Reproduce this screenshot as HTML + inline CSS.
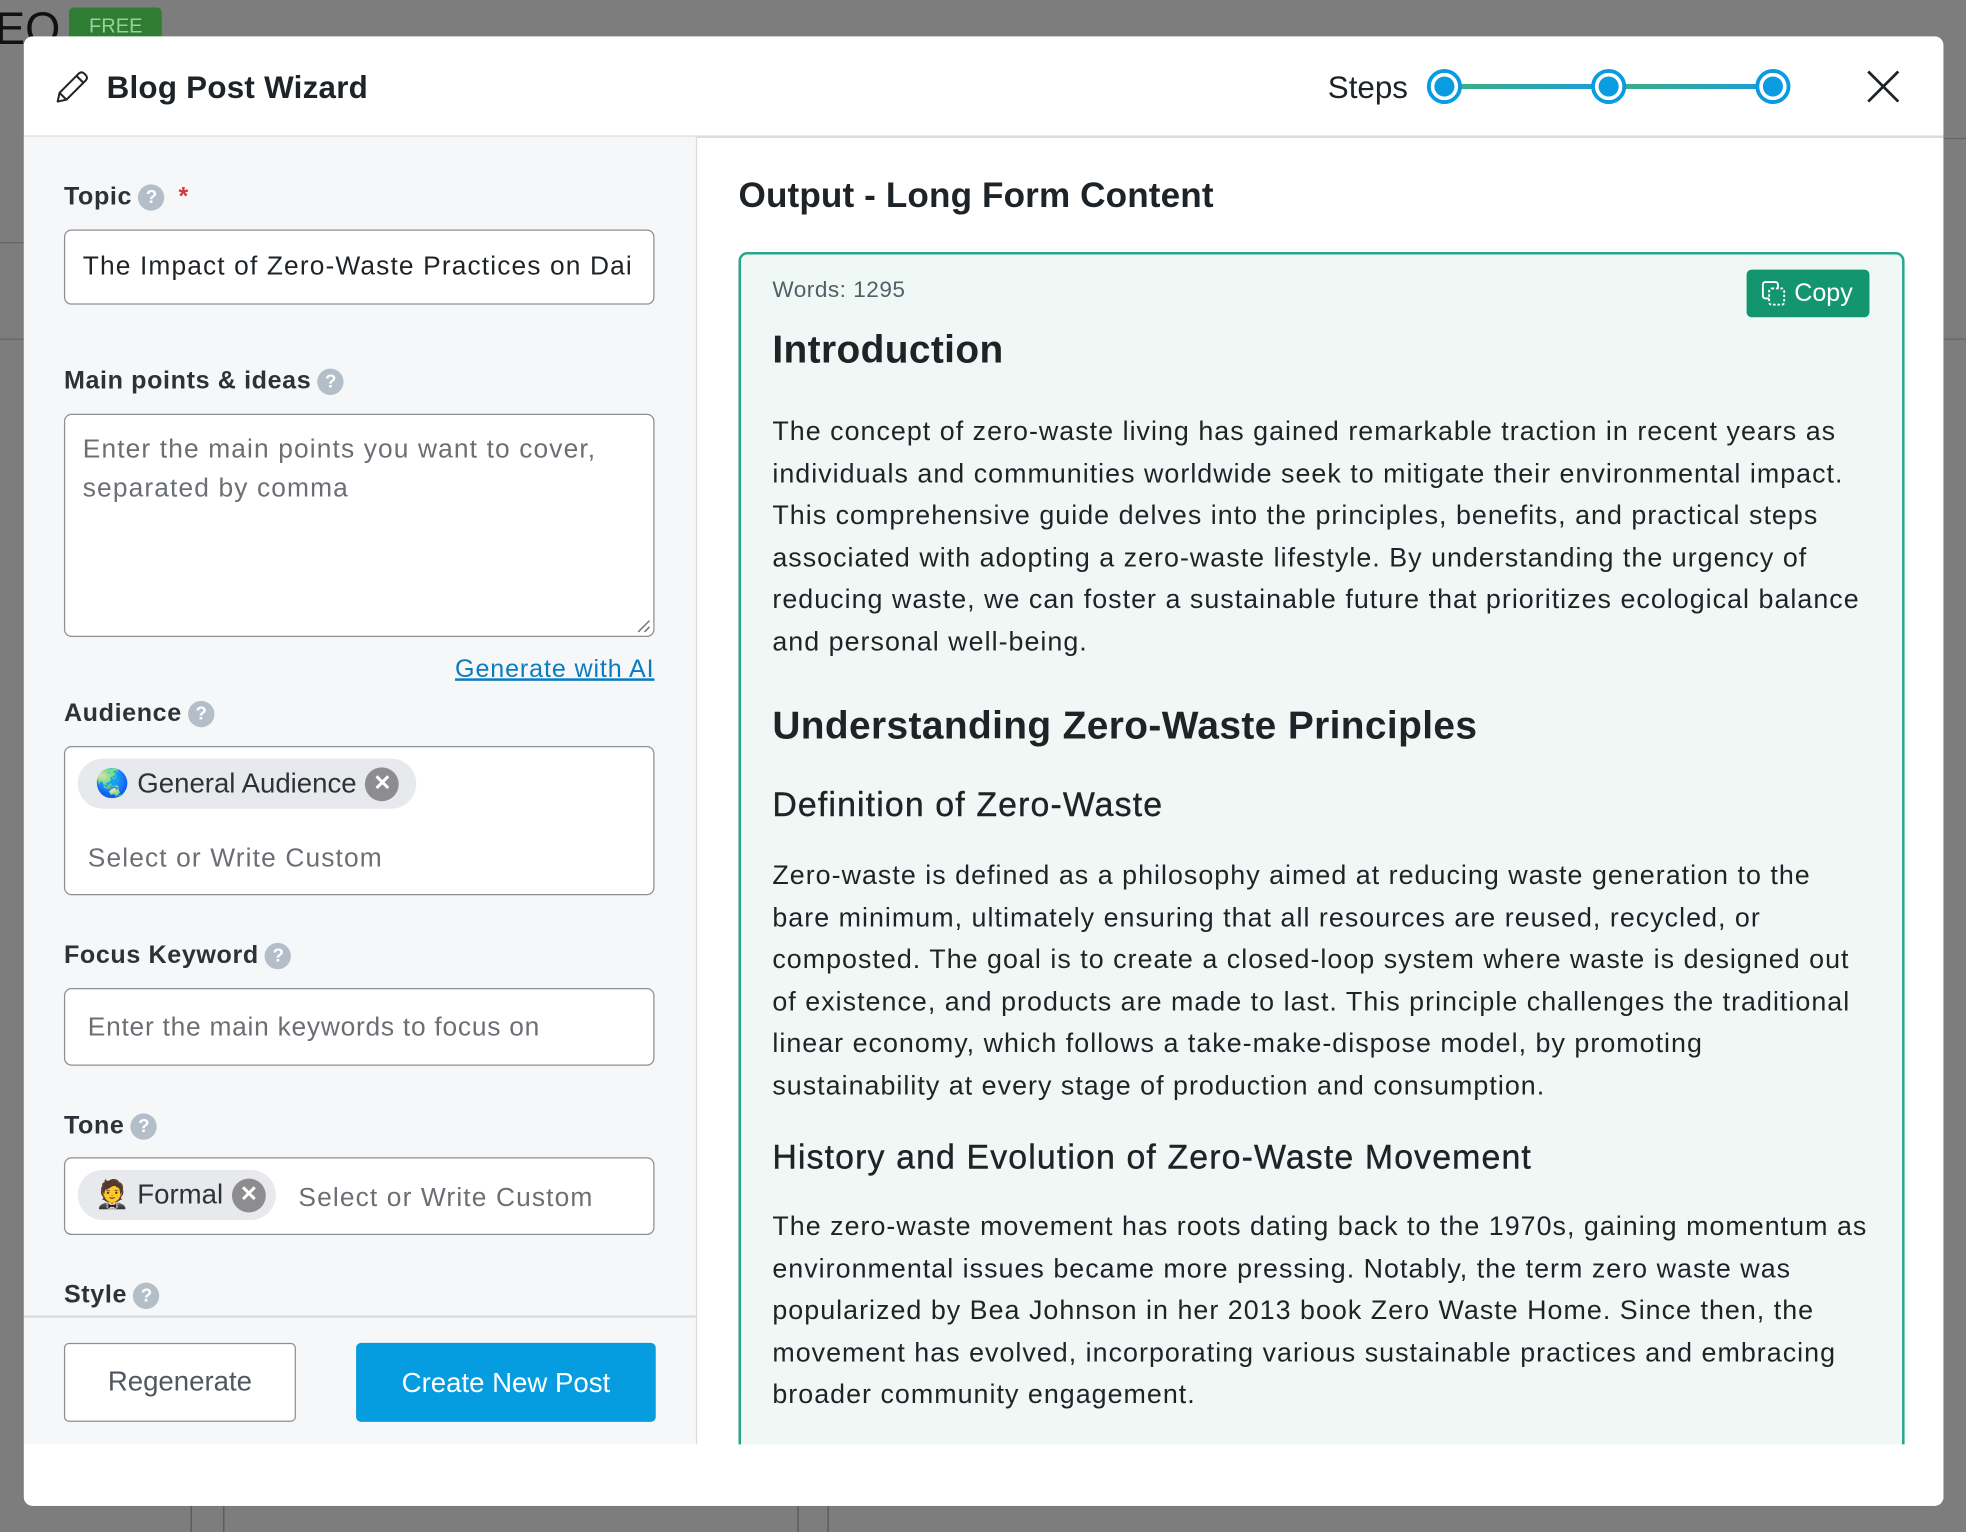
<!DOCTYPE html>
<html><head><meta charset="utf-8"><style>
*{box-sizing:border-box;margin:0;padding:0}
html,body{width:1966px;height:1532px;overflow:hidden;background:#7d7d7d}
#w{position:absolute;left:0;top:0;width:1568px;height:1222px;transform:scale(1.25383);transform-origin:0 0;font-family:"Liberation Sans",sans-serif;color:#1e2327}
.a{position:absolute}
.modal{left:19px;top:29px;width:1531px;height:1172px;background:#fff;border-radius:7px;overflow:hidden}
.lbl{position:absolute;left:32px;font-size:20px;font-weight:bold;color:#2c3338;display:flex;align-items:center;gap:5px;height:26px;letter-spacing:0.5px}
.q{width:21px;height:21px;border-radius:50%;background:#b4bec8;color:#fff;font-size:15px;font-weight:bold;display:inline-flex;align-items:center;justify-content:center;letter-spacing:0}
.inp{position:absolute;left:32px;width:471px;border:1.5px solid #8c8f94;border-radius:6px;background:#fff;font-size:21px;letter-spacing:0.9px}
.ph{color:#6b6f74;letter-spacing:0.9px}
.chip{position:absolute;height:40px;border-radius:20px;background:#e8e9ed;display:flex;align-items:center;font-size:22px;color:#2c3338;padding-left:14px}
.x{width:27px;height:27px;border-radius:50%;background:#8d8d8f;color:#fff;font-size:17px;font-weight:bold;display:inline-flex;align-items:center;justify-content:center;margin-left:7px}
.p{font-size:21.4px;line-height:33.5px;color:#1e2327;white-space:nowrap;letter-spacing:0.82px}
.h2{font-size:31px;font-weight:bold;color:#1e2327;white-space:nowrap;letter-spacing:0.3px}
.h3{font-size:27px;color:#1e2327;white-space:nowrap;letter-spacing:0.9px;-webkit-text-stroke:0.3px #1e2327}
</style></head><body><div id="w">
<div class="a" style="left:-4px;top:2px;font-size:36px;color:#111">EO</div>
<div class="a" style="left:55px;top:6px;width:74px;height:26px;background:#2e7d32;border-radius:4px;color:#9ad09c;font-size:16px;padding:7px 0 0 16px">FREE</div>
<div class="a" style="left:0;top:193px;width:19px;height:1px;background:#666"></div>
<div class="a" style="left:0;top:270px;width:19px;height:1px;background:#666"></div>
<div class="a" style="left:1550px;top:110px;width:18px;height:1px;background:#666"></div>
<div class="a" style="left:1550px;top:270px;width:18px;height:1px;background:#666"></div>
<div class="a" style="left:152px;top:1201px;width:1px;height:21px;background:#555"></div>
<div class="a" style="left:178px;top:1201px;width:1px;height:21px;background:#555"></div>
<div class="a" style="left:636px;top:1201px;width:1px;height:21px;background:#555"></div>
<div class="a" style="left:660px;top:1201px;width:1px;height:21px;background:#555"></div>

<div class="a modal">
 <svg class="a" style="left:25px;top:26px" width="28" height="28" viewBox="0 0 28 28"><path d="M2 26 L3.5 19 L19 3.5 Q21 1.8 23 3.5 L24.5 5 Q26.2 7 24.5 9 L9 24.5 Z M17 5.5 L22.5 11 M3.5 19 L9 24.5" fill="none" stroke="#1e2327" stroke-width="1.6" stroke-linejoin="round"/></svg>
 <div class="a" style="left:66px;top:27px;font-size:25px;font-weight:bold;color:#1e2327;letter-spacing:0.2px">Blog Post Wizard</div>
 <div class="a" style="left:1040px;top:27px;font-size:25px;color:#1e2327">Steps</div>
 <div class="a" style="left:1133px;top:38px;width:262px;height:4px;background:linear-gradient(90deg,#3fb07a,#1a9de0 50%,#3fb07a 50%,#1a9de0)"></div>
 <div class="a" style="left:1119px;top:26px;width:28px;height:28px;border-radius:50%;background:#0b9be0;border:3px solid #0b9be0;box-shadow:inset 0 0 0 3px #fff"></div>
 <div class="a" style="left:1250px;top:26px;width:28px;height:28px;border-radius:50%;background:#0b9be0;border:3px solid #0b9be0;box-shadow:inset 0 0 0 3px #fff"></div>
 <div class="a" style="left:1381px;top:26px;width:28px;height:28px;border-radius:50%;background:#0b9be0;border:3px solid #0b9be0;box-shadow:inset 0 0 0 3px #fff"></div>
 <svg class="a" style="left:1470px;top:27px" width="26" height="26" viewBox="0 0 26 26"><path d="M1 1 L25 25 M25 1 L1 25" stroke="#1e2327" stroke-width="2.2"/></svg>
 <div class="a" style="left:0;top:79px;width:1531px;height:1.5px;background:#dcdcde"></div>

 <div class="a" style="left:0;top:80px;width:537px;height:1043px;background:#f6f7f9;border-right:1.5px solid #dcdcde">
  <div class="lbl" style="top:35px">Topic <span class="q">?</span><span style="color:#d63638;margin-left:6px">*</span></div>
  <div class="inp" style="top:74px;height:60px;padding:17px 0 0 14px;white-space:nowrap;overflow:hidden">The Impact of Zero-Waste Practices on Dai</div>
  <div class="lbl" style="top:182px">Main points &amp; ideas <span class="q">?</span></div>
  <div class="inp ph" style="top:221px;height:178px;padding:12px 14px;line-height:31px">Enter the main points you want to cover, separated by comma
   <svg class="a" style="right:2px;bottom:2px" width="12" height="12"><path d="M11 2 L2 11 M11 7 L7 11" stroke="#777" stroke-width="1.2"/></svg></div>
  <div class="a" style="right:33px;top:414px;font-size:20px;color:#0a7cc0;text-decoration:underline;letter-spacing:0.7px">Generate with AI</div>
  <div class="lbl" style="top:447px">Audience <span class="q">?</span></div>
  <div class="inp" style="top:486px;height:119px"></div>
  <div class="chip" style="left:43px;top:496px;width:270px">🌏&nbsp;General Audience<span class="x">✕</span></div>
  <div class="a ph" style="left:51px;top:564px;font-size:21px">Select or Write Custom</div>
  <div class="lbl" style="top:640px">Focus Keyword <span class="q">?</span></div>
  <div class="inp ph" style="top:679px;height:62px;padding:19px 0 0 18px;letter-spacing:0.6px">Enter the main keywords to focus on</div>
  <div class="lbl" style="top:776px">Tone <span class="q">?</span></div>
  <div class="inp" style="top:814px;height:62px"></div>
  <div class="chip" style="left:43px;top:824px;width:158px">🤵&nbsp;Formal<span class="x">✕</span></div>
  <div class="a ph" style="left:219px;top:835px;font-size:21px">Select or Write Custom</div>
  <div class="lbl" style="top:911px">Style <span class="q">?</span></div>
  <div class="a" style="left:0;top:940px;width:537px;height:1.5px;background:#dcdcde"></div>
  <div class="a" style="left:32px;top:962px;width:185px;height:63px;border:1.5px solid #8c8f94;border-radius:4px;background:#fff;font-size:22px;color:#50575e;text-align:center;line-height:60px">Regenerate</div>
  <div class="a" style="left:265px;top:962px;width:239px;height:63px;border-radius:4px;background:#069de0;font-size:22px;color:#fff;text-align:center;line-height:63px">Create New Post</div>
 </div>

 <div class="a" style="left:570px;top:111px;font-size:28px;font-weight:bold;color:#1e2327;letter-spacing:0.1px">Output - Long Form Content</div>
 <div class="a" style="left:570px;top:172px;width:930px;height:960px;border:2px solid #2aa58a;border-radius:7px;background:#eff8f5;overflow:hidden">
  <div class="a" style="left:25px;top:18px;font-size:18px;color:#555d66;letter-spacing:0.4px">Words: 1295</div>
  <div class="a" style="left:802px;top:12px;width:98px;height:38px;border-radius:4px;background:#139670;color:#fff;font-size:20px;line-height:38px;padding-left:38px">Copy
   <svg class="a" style="left:12px;top:9px" width="20" height="20" viewBox="0 0 20 20"><rect x="1" y="1" width="12" height="13" rx="2" fill="none" stroke="#fff" stroke-width="1.5"/><rect x="6" y="6" width="12" height="13" rx="2" fill="#139670" stroke="#fff" stroke-width="1.5" stroke-dasharray="2 1.5"/></svg></div>
  <div class="a h2" style="left:25px;top:58px">Introduction</div>
  <div class="a p" style="left:25px;top:125px">The concept of zero-waste living has gained remarkable traction in recent years as<br>individuals and communities worldwide seek to mitigate their environmental impact.<br>This comprehensive guide delves into the principles, benefits, and practical steps<br>associated with adopting a zero-waste lifestyle. By understanding the urgency of<br>reducing waste, we can foster a sustainable future that prioritizes ecological balance<br>and personal well-being.</div>
  <div class="a h2" style="left:25px;top:358px">Understanding Zero-Waste Principles</div>
  <div class="a h3" style="left:25px;top:424px">Definition of Zero-Waste</div>
  <div class="a p" style="left:25px;top:479px">Zero-waste is defined as a philosophy aimed at reducing waste generation to the<br>bare minimum, ultimately ensuring that all resources are reused, recycled, or<br>composted. The goal is to create a closed-loop system where waste is designed out<br>of existence, and products are made to last. This principle challenges the traditional<br>linear economy, which follows a take-make-dispose model, by promoting<br>sustainability at every stage of production and consumption.</div>
  <div class="a h3" style="left:25px;top:705px">History and Evolution of Zero-Waste Movement</div>
  <div class="a p" style="left:25px;top:759px">The zero-waste movement has roots dating back to the 1970s, gaining momentum as<br>environmental issues became more pressing. Notably, the term zero waste was<br>popularized by Bea Johnson in her 2013 book Zero Waste Home. Since then, the<br>movement has evolved, incorporating various sustainable practices and embracing<br>broader community engagement.</div>
 </div>
 <div class="a" style="left:0;top:1123px;width:1531px;height:49px;background:#fff"></div>
</div>
</div></body></html>
